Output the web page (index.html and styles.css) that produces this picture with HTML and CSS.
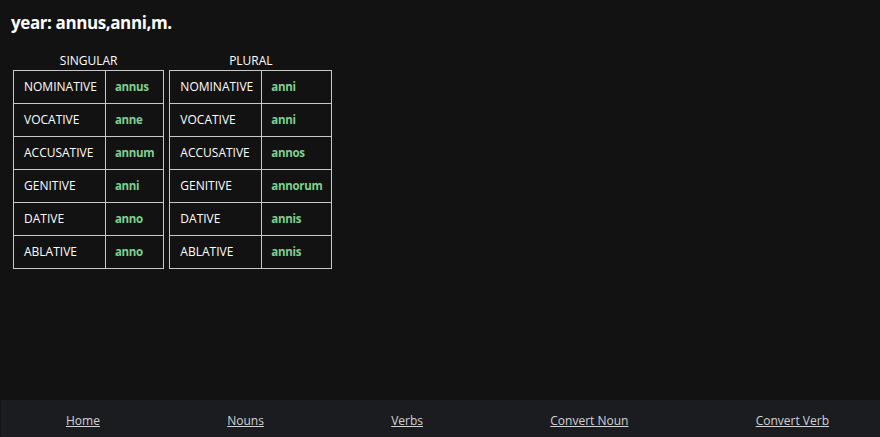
FILE: index.html
```html
<!DOCTYPE html>
<html lang="en">
<head>
<meta charset="utf-8">
<title>annus</title>
<link rel="stylesheet" href="styles.css">
</head>
<body>
<main class="page">
  <h1 class="title">year: annus,anni,m.</h1>
  <div class="tables">
    <table class="decl">
      <caption>SINGULAR</caption>
      <tbody>
        <tr><td class="case">NOMINATIVE</td><td class="form">annus</td></tr>
        <tr><td class="case">VOCATIVE</td><td class="form">anne</td></tr>
        <tr><td class="case">ACCUSATIVE</td><td class="form">annum</td></tr>
        <tr><td class="case">GENITIVE</td><td class="form">anni</td></tr>
        <tr><td class="case">DATIVE</td><td class="form">anno</td></tr>
        <tr><td class="case">ABLATIVE</td><td class="form">anno</td></tr>
      </tbody>
    </table>
    <table class="decl">
      <caption>PLURAL</caption>
      <tbody>
        <tr><td class="case">NOMINATIVE</td><td class="form">anni</td></tr>
        <tr><td class="case">VOCATIVE</td><td class="form">anni</td></tr>
        <tr><td class="case">ACCUSATIVE</td><td class="form">annos</td></tr>
        <tr><td class="case">GENITIVE</td><td class="form">annorum</td></tr>
        <tr><td class="case">DATIVE</td><td class="form">annis</td></tr>
        <tr><td class="case">ABLATIVE</td><td class="form">annis</td></tr>
      </tbody>
    </table>
  </div>
</main>
<footer class="footer">
  <a href="#">Home</a>
  <a href="#">Nouns</a>
  <a href="#">Verbs</a>
  <a href="#">Convert Noun</a>
  <a href="#">Convert Verb</a>
</footer>
</body>
</html>
```

FILE: styles.css
```css
html, body {
  margin: 0;
  padding: 0;
}
body {
  background: #121212;
  color: #ffffff;
  font-family: "Open Sans", "Noto Sans", sans-serif;
  min-height: 100vh;
  display: flex;
  flex-direction: column;
}
.page {
  flex: 1;
  padding: 12px 0 0 11px;
}
.title {
  margin: 0;
  font-size: 17px;
  font-weight: 700;
  line-height: 22px;
  letter-spacing: -0.4px;
}
.tables {
  display: flex;
  align-items: flex-start;
  gap: 5px;
  margin-top: 19px;
  padding-left: 2px;
}
.decl {
  border-collapse: collapse;
  border: 1px solid #8a8a8a;
}
.decl caption {
  font-size: 12px;
  line-height: 16px;
  padding-bottom: 1px;
  text-align: center;
}
.decl td {
  border: 1px solid #c8c8c8;
  height: 33px;
  box-sizing: border-box;
  padding: 0 8px 0 10px;
  font-size: 12px;
  line-height: 16px;
  white-space: nowrap;
}
.decl td.form {
  color: #7fd08f;
  font-weight: 700;
  font-size: 11.5px;
  letter-spacing: -0.3px;
  padding: 0 9px 0 9px;
}
.footer {
  height: 37px;
  margin-left: 1px;
  background: #1b1c20;
  display: flex;
  align-items: center;
  justify-content: space-between;
  padding: 4px 51px 0 65px;
  box-sizing: border-box;
}
.footer a {
  color: #d2d2d2;
  font-size: 12px;
  text-decoration: underline;
}
```
